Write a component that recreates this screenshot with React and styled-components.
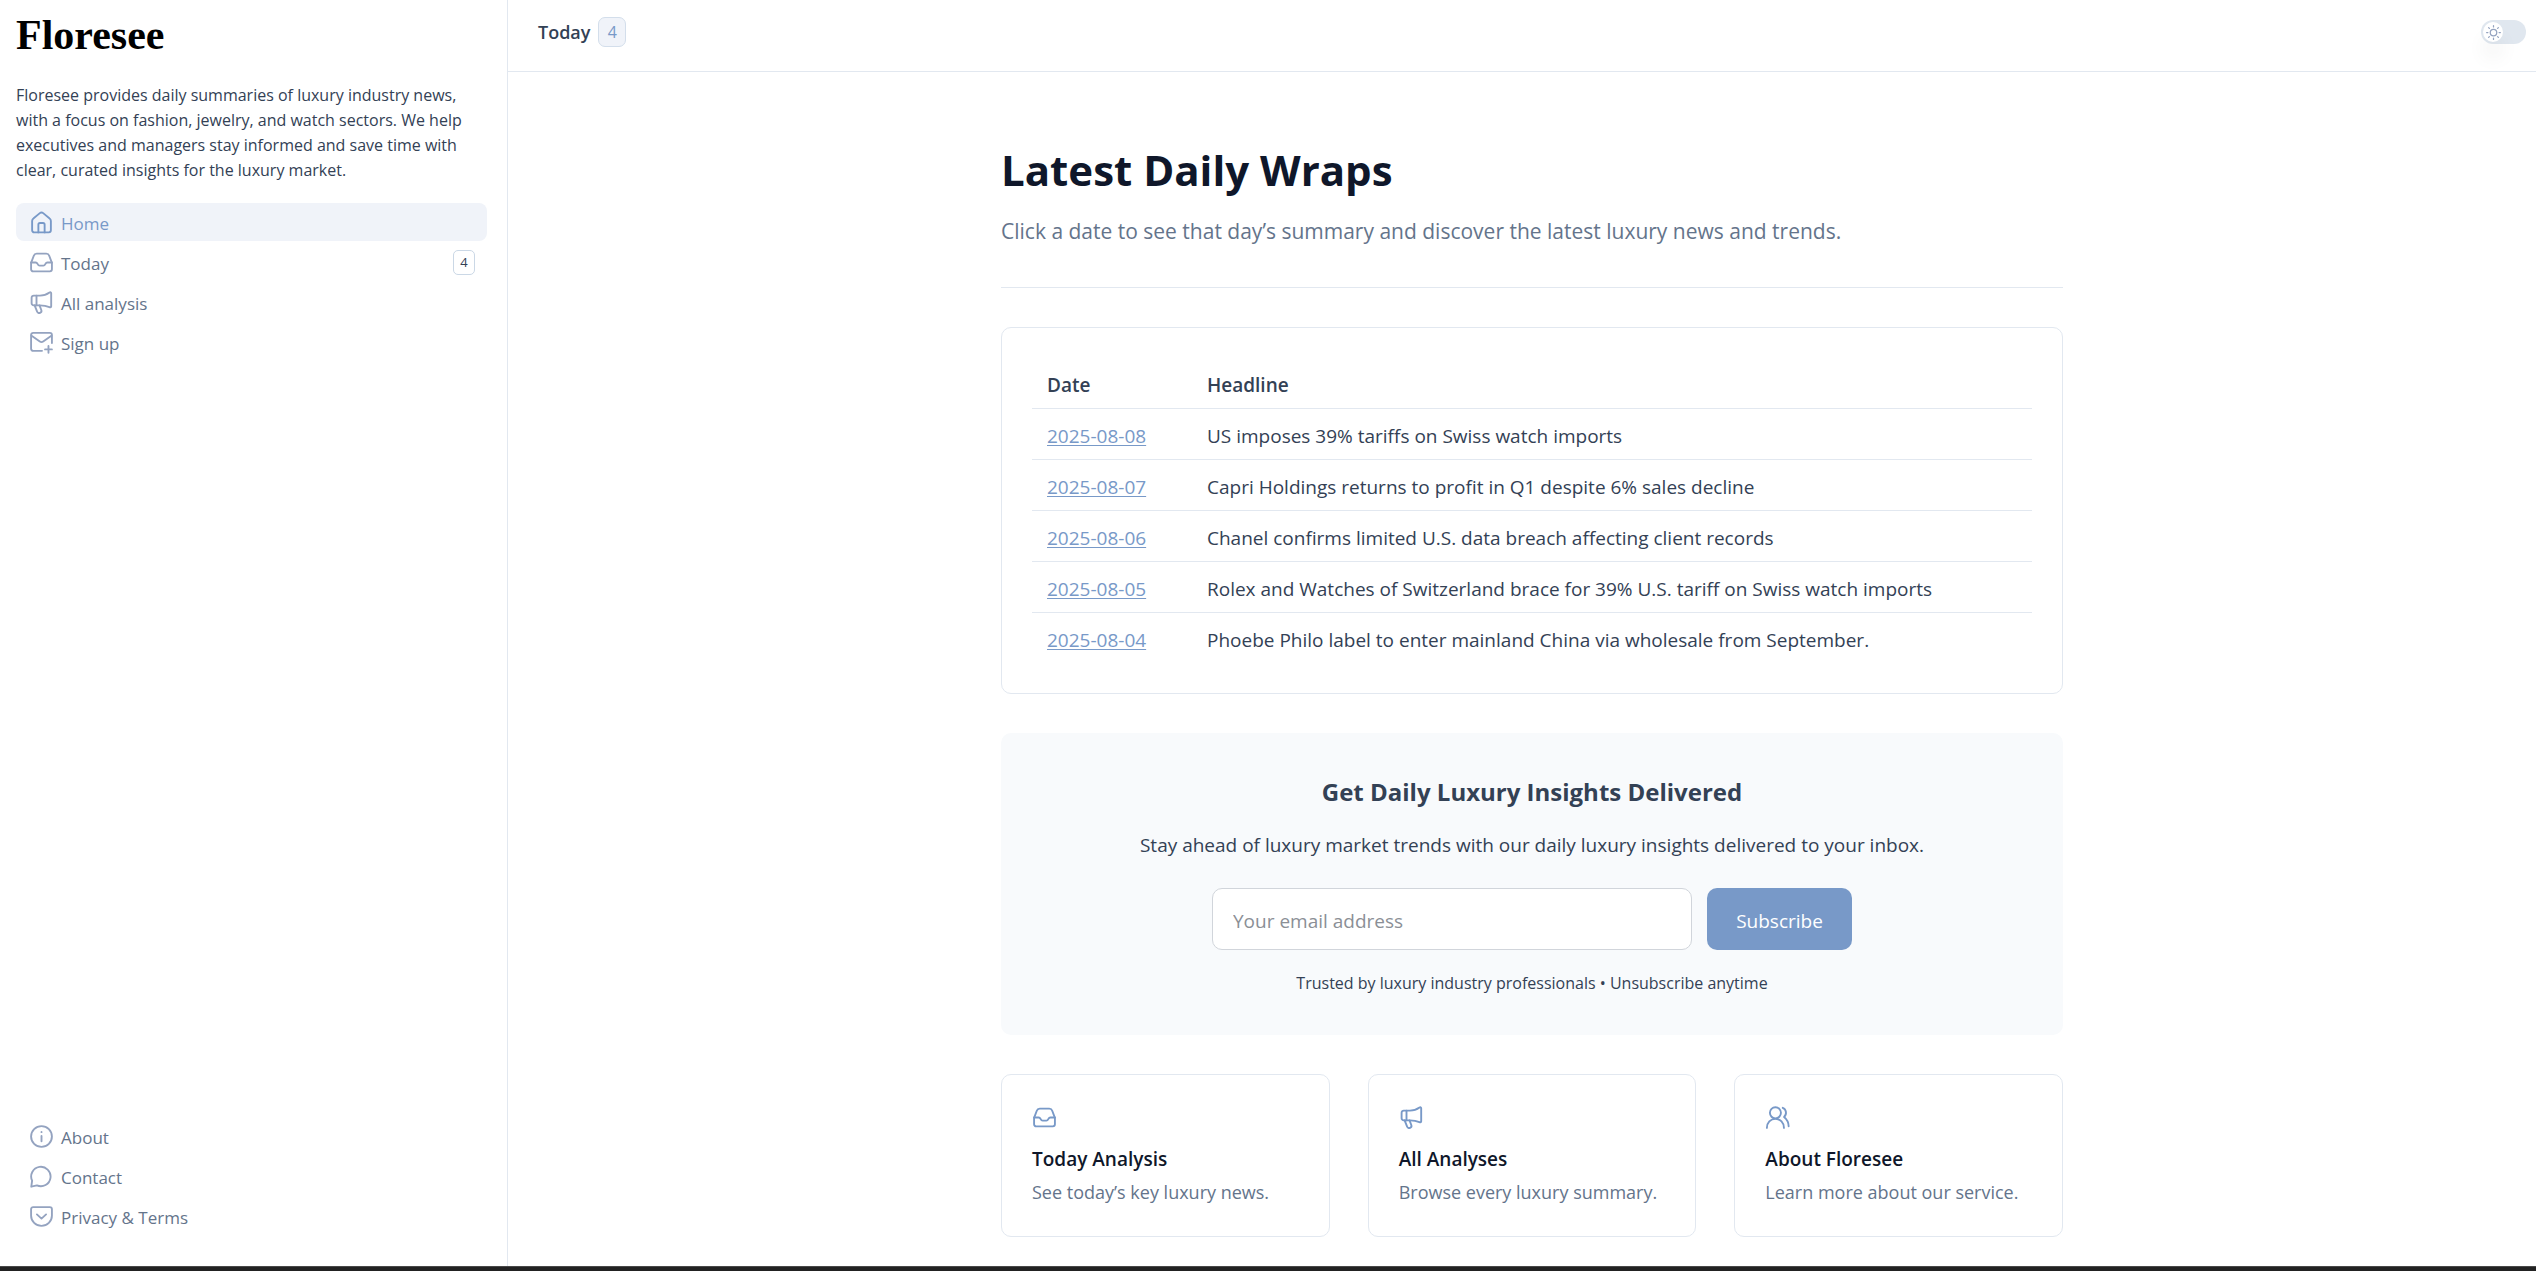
import React from "react";
import styled, { createGlobalStyle } from "styled-components";

const color = {
  ink: "#0f172a",
  text: "#334155",
  muted: "#64748b",
  icon: "#94a3c0",
  accent: "#7899c8",
  line: "#e2e8f0",
  tint: "#f0f3f9",
  panel: "#f8fafc",
};

const GlobalStyle = createGlobalStyle`
  *, *::before, *::after { box-sizing: border-box; }
  body {
    margin: 0;
    background: #fff;
    color: ${color.text};
    font-family: "Open Sans", "Noto Sans", sans-serif;
    font-size: 19px;
  }
  h1, h2, h3, p, ul { margin: 0; padding: 0; }
  a { color: inherit; text-decoration: none; }
`;

const Page = styled.div`
  min-height: 100vh;
  display: flex;
  flex-direction: column;
`;

const Shell = styled.div`
  flex: 1;
  display: flex;
`;

const BottomEdge = styled.footer`
  height: 5px;
  background: #222;
  border-top: 1px solid #484848;
`;

const Sidebar = styled.aside`
  flex: 0 0 508px;
  display: flex;
  flex-direction: column;
  padding: 13px 20px 31px 16px;
  border-right: 1px solid ${color.line};
`;

const Logo = styled.a`
  align-self: flex-start;
  color: #000;
  font: 700 42px/44px "Liberation Serif", serif;
`;

const About = styled.p`
  margin: 26px 0 20px;
  font-size: 16px;
  line-height: 25px;
`;

const NavList = styled.ul`
  display: flex;
  flex-direction: column;
  gap: 2px;
  list-style: none;
  margin-top: ${(p) => (p.$bottom ? "auto" : "0")};
`;

const NavLink = styled.a`
  display: flex;
  align-items: center;
  gap: 7px;
  height: 38px;
  padding: 0 12px 0 13px;
  border-radius: 8px;
  font-size: 17px;
  line-height: 25px;
  color: ${(p) => (p.$active ? color.accent : color.muted)};
  background: ${(p) => (p.$active ? color.tint : "transparent")};

  svg { color: ${(p) => (p.$active ? color.accent : color.icon)}; }
`;

const NavLabel = styled.span`
  padding-top: 2px;
`;

const NavBadge = styled.span`
  margin-left: auto;
  width: 22px;
  height: 25px;
  border: 1px solid #cbd8e6;
  border-radius: 5px;
  color: ${color.text};
  font-size: 13px;
  line-height: 23px;
  text-align: center;
`;

const Main = styled.div`
  flex: 1;
  min-width: 0;
`;

const TopBar = styled.header`
  display: flex;
  align-items: center;
  justify-content: space-between;
  height: 72px;
  padding: 0 10px 7px 30px;
  border-bottom: 1px solid ${color.line};
`;

const TopTitle = styled.h2`
  display: flex;
  align-items: center;
  gap: 8px;
  font-size: 18px;
  line-height: 26px;
  font-weight: 600;
`;

const CountBadge = styled.span`
  width: 28px;
  height: 30px;
  border: 1px solid #d3deeb;
  border-radius: 7px;
  background: ${color.tint};
  color: ${color.accent};
  font-size: 16px;
  font-weight: 400;
  line-height: 28px;
  text-align: center;
`;

const Switch = styled.button`
  display: flex;
  align-items: center;
  width: 45px;
  height: 24px;
  padding: 0 2px;
  border: 0;
  border-radius: 12px;
  background: #e0e7ef;
`;

const Thumb = styled.span`
  display: flex;
  align-items: center;
  justify-content: center;
  width: 20px;
  height: 20px;
  border-radius: 50%;
  background: #fff;
  color: ${color.icon};
  box-shadow: 0 16px 20px rgba(0, 0, 0, 0.06);
`;

const Content = styled.main`
  padding: 69px 0 29px 20px;
`;

const Column = styled.div`
  max-width: 1062px;
  margin: 0 auto;
  display: flex;
  flex-direction: column;
  gap: 39px;
`;

const PageHeader = styled.header`
  padding-bottom: 39px;
  border-bottom: 1px solid ${color.line};
`;

const Title = styled.h1`
  color: ${color.ink};
  font-size: 42px;
  line-height: 58px;
  font-weight: 700;
`;

const Subtitle = styled.p`
  margin-top: 15px;
  color: ${color.muted};
  font-size: 21px;
  line-height: 34px;
`;

const TableCard = styled.section`
  padding: 30px;
  border: 1px solid ${color.line};
  border-radius: 10px;
`;

const Table = styled.table`
  width: 100%;
  border-collapse: collapse;
  table-layout: fixed;
`;

const HeadRow = styled.tr`
  height: 50px;
  border-bottom: 1px solid ${color.line};
`;

const Row = styled.tr`
  height: 51px;

  & + & { border-top: 1px solid ${color.line}; }
`;

const HeadCell = styled.th`
  width: ${(p) => (p.$narrow ? "160px" : "auto")};
  padding: 4px 15px 0;
  font-size: 19px;
  line-height: 30px;
  font-weight: 600;
  text-align: left;
`;

const Cell = styled.td`
  padding: 4px 15px 0;
  font-size: 19px;
  line-height: 30px;
`;

const DateLink = styled.a`
  color: ${color.accent};
  text-decoration: underline;
  text-decoration-thickness: 1px;
  text-underline-offset: 2px;
`;

const Promo = styled.section`
  padding: 39px 30px 38px;
  border-radius: 10px;
  background: ${color.panel};
  text-align: center;
`;

const PromoTitle = styled.h2`
  font-size: 24px;
  line-height: 40px;
  font-weight: 700;
`;

const PromoText = styled.p`
  margin: 15px 0 25px;
  font-size: 19px;
  line-height: 36px;
`;

const Form = styled.form`
  display: flex;
  gap: 15px;
  max-width: 640px;
  margin: 0 auto;
`;

const EmailInput = styled.input`
  flex: 1;
  min-width: 0;
  height: 62px;
  padding: 4px 20px 0;
  border: 1px solid #d1d5db;
  border-radius: 10px;
  background: #fff;
  font: 19px/30px "Open Sans", "Noto Sans", sans-serif;

  &::placeholder { color: #8b8f96; opacity: 1; }
`;

const Subscribe = styled.button`
  width: 145px;
  height: 62px;
  padding: 4px 0 0;
  border: 0;
  border-radius: 10px;
  background: ${color.accent};
  color: #fff;
  font: 19px/30px "Open Sans", "Noto Sans", sans-serif;
`;

const Fine = styled.p`
  margin-top: 19px;
  font-size: 16px;
  line-height: 28px;
`;

const Cards = styled.div`
  display: grid;
  grid-template-columns: repeat(3, 1fr);
  gap: 38px;
`;

const Card = styled.a`
  padding: 30px;
  border: 1px solid ${color.line};
  border-radius: 10px;

  svg { display: block; color: ${color.accent}; }
`;

const CardTitle = styled.h3`
  margin: 14px 0 4px;
  color: ${color.ink};
  font-size: 19px;
  line-height: 30px;
  font-weight: 600;
`;

const CardText = styled.p`
  color: ${color.muted};
  font-size: 18px;
  line-height: 28px;
`;

const shapes = {
  home: (
    <>
      <path d="M3 10.6c0-1 .4-1.9 1.2-2.5L10.4 3a2.5 2.5 0 0 1 3.2 0l6.2 5.1c.8.6 1.2 1.5 1.2 2.5v8.9a2 2 0 0 1-2 2H5a2 2 0 0 1-2-2z" />
      <path d="M9 21.5V14a1.5 1.5 0 0 1 1.5-1.5h3A1.5 1.5 0 0 1 15 14v7.5" />
    </>
  ),
  inbox: (
    <>
      <path d="M2 12.4 4.6 5.5a3 3 0 0 1 2.8-2h9.2a3 3 0 0 1 2.8 2L22 12.4v6.1a2 2 0 0 1-2 2H4a2 2 0 0 1-2-2z" />
      <path d="M2 12h4.4c.9 0 1.4.5 1.8 1.3.5 1 1 1.7 2 1.7h3.6c1 0 1.5-.7 2-1.7.4-.8.9-1.3 1.8-1.3H22" />
    </>
  ),
  megaphone: (
    <>
      <path d="M4.5 5.4h6c3.6 0 6.6-1 9.2-2.9.8-.6 1.6-.3 1.6.7v12.3c0 1-.8 1.3-1.7.9-2.7-1.2-5.7-1.7-9.1-1.7h-6a2 2 0 0 1-2-2V7.400a2 2 0 0 1 2-2z" />
      <path d="M7.2 5.4v9.3M5.4 14.7l2.3 5.9a2.2 2.2 0 0 0 2.9 1.3 2.1 2.1 0 0 0 1.2-2.7l-1.7-4.4" />
    </>
  ),
  mailPlus: (
    <>
      <path d="M12.5 20H4a2 2 0 0 1-2-2V4.800a2 2 0 0 1 2-2h16a2 2 0 0 1 2 2v7.700" />
      <path d="m2.500 5.500 7.900 5.600c1 .7 2.200.7 3.200 0l7.900-5.600M18.700 15.300v6.600M15.400 18.600H22" />
    </>
  ),
  info: (
    <>
      <circle cx="12" cy="12" r="10" />
      <path d="M12 11.5v5M12 7.6v.2" />
    </>
  ),
  chat: <path d="M2.2 21.800 3 16a9.300 9.300 0 1 1 4.600 4.500z" />,
  pocket: (
    <>
      <path d="M4 3h16a2 2 0 0 1 2 2v6.300a10 9.700 0 0 1-20 0V5a2 2 0 0 1 2-2z" />
      <path d="m7.600 10 4.400 4 4.400-4" />
    </>
  ),
  users: (
    <>
      <circle cx="10" cy="7.5" r="5.3" />
      <path d="M1.8 22c0-5 3.5-8.7 8.2-8.7s8.2 3.7 8.2 8.7" />
      <path d="M17 2.700c3.500 1.400 4.300 6.200 1.300 8.800 2.800 2.300 4.400 5.300 4.400 9" />
    </>
  ),
  sun: (
    <>
      <circle cx="12" cy="12" r="5.2" />
      <path d="M12 1v2M12 21v2M1 12h2M21 12h2M4.200 4.200l1.200 1.200M18.600 18.600l1.200 1.200M4.200 19.800l1.200-1.200M18.600 5.400l1.200-1.200" />
    </>
  ),
};

function Icon({ name, size = 25, weight = 1.8 }) {
  return (
    <svg
      width={size}
      height={size}
      viewBox="0 0 24 24"
      fill="none"
      stroke="currentColor"
      strokeWidth={weight}
      strokeLinecap="round"
      strokeLinejoin="round"
      aria-hidden="true"
    >
      {shapes[name]}
    </svg>
  );
}

const primaryNav = [
  { icon: "home", label: "Home", active: true },
  { icon: "inbox", label: "Today", badge: 4 },
  { icon: "megaphone", label: "All analysis" },
  { icon: "mailPlus", label: "Sign up" },
];

const secondaryNav = [
  { icon: "info", label: "About" },
  { icon: "chat", label: "Contact" },
  { icon: "pocket", label: "Privacy & Terms" },
];

const wraps = [
  ["2025-08-08", "US imposes 39% tariffs on Swiss watch imports"],
  ["2025-08-07", "Capri Holdings returns to profit in Q1 despite 6% sales decline"],
  ["2025-08-06", "Chanel confirms limited U.S. data breach affecting client records"],
  ["2025-08-05", "Rolex and Watches of Switzerland brace for 39% U.S. tariff on Swiss watch imports"],
  ["2025-08-04", "Phoebe Philo label to enter mainland China via wholesale from September."],
];

const cards = [
  { icon: "inbox", title: "Today Analysis", text: "See today’s key luxury news." },
  { icon: "megaphone", title: "All Analyses", text: "Browse every luxury summary." },
  { icon: "users", title: "About Floresee", text: "Learn more about our service." },
];

function Nav({ items, bottom, label }) {
  return (
    <NavList $bottom={bottom} aria-label={label}>
      {items.map((item) => (
        <li key={item.label}>
          <NavLink href="#" $active={item.active}>
            <Icon name={item.icon} />
            <NavLabel>{item.label}</NavLabel>
            {item.badge && <NavBadge>{item.badge}</NavBadge>}
          </NavLink>
        </li>
      ))}
    </NavList>
  );
}

export default function App() {
  return (
    <Page>
      <GlobalStyle />
      <Shell>
        <Sidebar>
          <Logo href="#">Floresee</Logo>
          <About>
            Floresee provides daily summaries of luxury industry news, with a focus on fashion,
            jewelry, and watch sectors. We help executives and managers stay informed and save time
            with clear, curated insights for the luxury market.
          </About>
          <Nav items={primaryNav} label="Main" />
          <Nav items={secondaryNav} label="More" bottom />
        </Sidebar>
        <Main>
          <TopBar>
            <TopTitle>
              Today <CountBadge>4</CountBadge>
            </TopTitle>
            <Switch type="button" role="switch" aria-checked="false" aria-label="Dark mode">
              <Thumb>
                <Icon name="sun" size={15} weight={2} />
              </Thumb>
            </Switch>
          </TopBar>
          <Content>
            <Column>
              <PageHeader>
                <Title>Latest Daily Wraps</Title>
                <Subtitle>
                  Click a date to see that day’s summary and discover the latest luxury news and
                  trends.
                </Subtitle>
              </PageHeader>
              <TableCard>
                <Table>
                  <thead>
                    <HeadRow>
                      <HeadCell $narrow scope="col">Date</HeadCell>
                      <HeadCell scope="col">Headline</HeadCell>
                    </HeadRow>
                  </thead>
                  <tbody>
                    {wraps.map(([date, headline]) => (
                      <Row key={date}>
                        <Cell>
                          <DateLink href="#">{date}</DateLink>
                        </Cell>
                        <Cell>{headline}</Cell>
                      </Row>
                    ))}
                  </tbody>
                </Table>
              </TableCard>
              <Promo>
                <PromoTitle>Get Daily Luxury Insights Delivered</PromoTitle>
                <PromoText>
                  Stay ahead of luxury market trends with our daily luxury insights delivered to
                  your inbox.
                </PromoText>
                <Form onSubmit={(e) => e.preventDefault()}>
                  <EmailInput
                    type="email"
                    placeholder="Your email address"
                    aria-label="Your email address"
                  />
                  <Subscribe type="submit">Subscribe</Subscribe>
                </Form>
                <Fine>Trusted by luxury industry professionals • Unsubscribe anytime</Fine>
              </Promo>
              <Cards>
                {cards.map((card) => (
                  <Card key={card.title} href="#">
                    <Icon name={card.icon} />
                    <CardTitle>{card.title}</CardTitle>
                    <CardText>{card.text}</CardText>
                  </Card>
                ))}
              </Cards>
            </Column>
          </Content>
        </Main>
      </Shell>
      <BottomEdge />
    </Page>
  );
}
